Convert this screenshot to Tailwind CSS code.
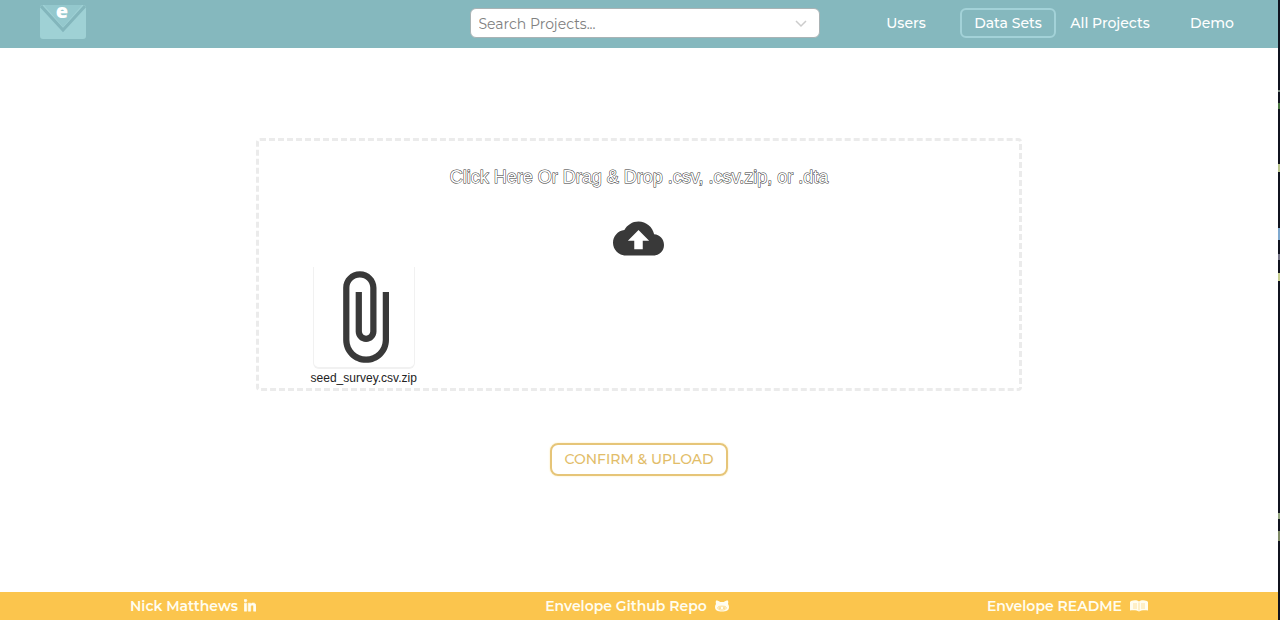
<!DOCTYPE html>
<html lang="en">
<head>
<meta charset="utf-8">
<meta name="viewport" content="width=device-width, initial-scale=1">
<title>Envelope</title>
<script src="https://cdn.jsdelivr.net/npm/@tailwindcss/browser@4"></script>
</head>
<body class="flex min-h-screen bg-white font-['Montserrat','Inter',sans-serif] text-sm">
  <div class="flex min-w-0 flex-1 flex-col">
    <header class="grid h-12 grid-cols-[1fr_350px_1fr] items-center bg-[#85b8be] pr-[15px] pb-0.5 pl-[26px]">
      <a href="#" aria-label="Envelope home" class="relative -mt-0.5 ml-3.5 block h-[34px] w-[46px]">
        <svg class="h-full w-full" viewBox="0 0 46 34" aria-hidden="true">
          <rect width="46" height="34" rx="3" fill="#9fd1d5"/>
          <path d="M4 0h38L23 22z" fill="#94c8cd"/>
          <path d="M1 1 23 25 45 1" fill="none" stroke="#83b6bc" stroke-width="3"/>
        </svg>
        <span class="absolute inset-x-0 -top-0.5 pr-0.5 text-center font-['Open_Sans',sans-serif] text-xl leading-4 font-extrabold text-white">e</span>
      </a>
      <div class="flex h-[30px] items-center rounded-md border border-[#a9b3b5] bg-white pr-3 pl-2">
        <input type="text" aria-label="Search Projects" placeholder="Search Projects..." class="min-w-0 flex-1 bg-transparent pt-px outline-none placeholder:text-[#808080]">
        <button type="button" aria-label="Show projects">
          <svg class="h-3 w-3" viewBox="0 0 12 12" fill="none" stroke="#cccccc" stroke-width="1.500" aria-hidden="true"><path d="m1 4 5 5 5-5"/></svg>
        </button>
      </div>
      <nav class="grid w-[408px] grid-cols-4 items-center justify-self-end text-center font-medium text-white">
        <a href="#" class="mx-[3px]">Users</a>
        <a href="#" class="mx-[3px] rounded-md border-2 border-[#a3d2d8] py-[3px] whitespace-nowrap">Data Sets</a>
        <a href="#" class="mx-[3px] whitespace-nowrap">All Projects</a>
        <a href="#" class="mx-[3px]">Demo</a>
      </nav>
    </header>

    <main class="flex flex-1 flex-col items-center pt-[90px]">
      <button type="button" class="flex w-3/5 flex-col items-center rounded-sm border-[3px] border-dashed border-[#ebebeb] font-['Liberation_Sans',Arial,sans-serif]">
        <span class="mt-6 text-lg leading-6 text-white [-webkit-text-stroke:1px_#333] [paint-order:stroke_fill]">Click Here Or Drag &amp; Drop .csv, .csv.zip, or .dta</span>
        <svg class="mt-6 h-[51px] w-[51px]" viewBox="0 0 24 24" fill="#393939" aria-hidden="true"><path d="M19.35 10.04C18.67 6.59 15.64 4 12 4 9.11 4 6.6 5.64 5.35 8.04 2.34 8.36 0 10.91 0 14c0 3.31 2.69 6 6 6h13c2.76 0 5-2.24 5-5 0-2.64-2.05-4.78-4.65-4.96zM14 13v4h-4v-4H7l5-5 5 5h-3z"/></svg>
        <span class="mt-[3px] ml-[51px] flex flex-col items-center self-start">
          <svg class="box-content h-[100px] w-[100px] rounded-b-md border-x border-b-2 border-[#f1f1f1]" viewBox="0 0 24 24" fill="#393939" aria-hidden="true"><path d="M16.5 6v11.5c0 2.21-1.79 4-4 4s-4-1.79-4-4V5c0-1.38 1.12-2.5 2.5-2.5s2.5 1.12 2.5 2.5v10.5c0 .55-.45 1-1 1s-1-.45-1-1V6H10v9.5c0 1.38 1.12 2.5 2.5 2.5s2.5-1.12 2.5-2.5V5c0-2.21-1.79-4-4-4S7 2.79 7 5v12.5c0 3.04 2.46 5.5 5.5 5.5s5.5-2.46 5.5-5.5V6h-1.5z"/></svg>
          <span class="px-px text-xs leading-[19px] text-[#222]">seed_survey.csv.zip</span>
        </span>
      </button>
      <button type="button" class="mt-[52px] rounded-lg border-2 border-[#e6c578] px-3 pt-1 pb-[5px] font-medium text-[#e2bd69] shadow-[0_0_2px_#ffe9a8]">CONFIRM &amp; UPLOAD</button>
    </main>

    <footer class="grid h-7 grid-cols-[1fr_auto_1fr] items-center bg-[#fbc54d] px-[130px] font-semibold text-[#fffdf0]">
      <a href="#" class="flex items-center gap-1.5 justify-self-start">Nick Matthews
        <svg class="h-3.5 w-3" viewBox="0 0 448 512" fill="currentColor" stroke="currentColor" stroke-width="20" aria-hidden="true"><path d="M100.3 448H7.4V148.900h92.900zM53.800 108.100C24.100 108.100 0 83.500 0 53.800a53.800 53.800 0 0 1 107.600 0c0 29.700-24.100 54.300-53.800 54.300zM447.900 448h-92.700V302.400c0-34.700-.7-79.200-48.300-79.200-48.300 0-55.700 37.700-55.700 76.700V448h-92.800V148.900h89.100v40.800h1.300c12.400-23.500 42.700-48.300 87.900-48.300 94 0 111.300 61.900 111.300 142.300V448z"/></svg>
      </a>
      <a href="#" class="flex items-center gap-2 pr-1">Envelope Github Repo
        <svg class="h-3 w-3.5" viewBox="0 0 14 11" aria-hidden="true"><path d="M1 0c2 0 3 .5 4 1.500h4C10 .5 11 0 13 0c.4 1.300.4 2.300 0 3.500.7.900 1 1.800 1 3C14 10 11.500 11 7 11S0 10 0 6.500c0-1.200.3-2.100 1-3C.6 2.300.6 1.300 1 0z" fill="currentColor"/><path d="M3 6.500c1-1.200 7-1.200 8 0 .8 1.500-.5 3-4 3s-4.800-1.500-4-3z" fill="none" stroke="#fbc54d" stroke-width=".6"/><path d="M5 7v1M9 7v1" stroke="#fbc54d" stroke-width="1.200" stroke-linecap="round"/></svg>
      </a>
      <a href="#" class="flex items-center gap-2 justify-self-end">Envelope README
        <svg class="h-3 w-[18px]" viewBox="0 0 18 12" aria-hidden="true"><path d="M1 1c3-1 6-1 8 .5 2-1.500 5-1.500 8-.5l1 1v8.500c-3-.5-7-.5-9 1-2-1.500-6-1.500-9-1V2z" fill="currentColor"/><path d="M9 2.500v8M3 4h4M3 6h4M3 8h4M11 4h4M11 6h4M11 8h4" stroke="#fbc54d" stroke-width=".5"/></svg>
      </a>
    </footer>
  </div>

  <!-- Sliver of the editor window behind the page -->
  <div class="flex w-0.5 flex-col bg-[#10131f]" aria-hidden="true">
    <div class="mt-[90px] h-0.5 bg-[#7b8a80]"></div>
    <div class="mt-[11px] h-1.5 bg-[#47733f]"></div>
    <div class="mt-[55px] h-2 bg-[#b9c58f]"></div>
    <div class="mt-14 h-3 bg-[#7fa9cf]"></div>
    <div class="mt-3.5 h-1.5 bg-[#747487]"></div>
    <div class="mt-[13px] h-2 bg-[#c6cf91]"></div>
    <div class="mt-[232px] h-1.5 bg-[#92a47f]"></div>
    <div class="mt-3 h-2.5 bg-[#7f8b68]"></div>
  </div>
</body>
</html>
